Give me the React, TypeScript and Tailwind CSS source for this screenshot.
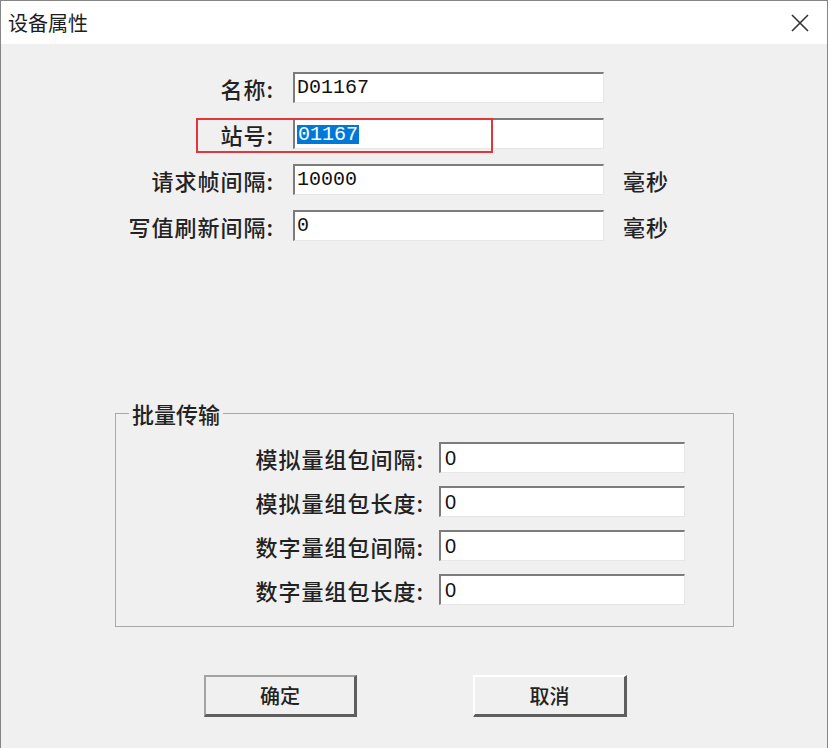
import React from "react";

const cjk = "font-['Noto_Sans_CJK_SC',sans-serif]";

function Field({ value, mono = true, selected = false }: { value: string; mono?: boolean; selected?: boolean }) {
  return (
    <div
      className={`h-[31px] bg-white border-t-2 border-l-2 border-t-[#7c7c7c] border-l-[#7c7c7c] border-b border-r border-b-[#e6e6e6] border-r-[#e6e6e6] flex items-center pl-[2px] text-[20px] text-[#111] ${
        mono ? "font-['Liberation_Mono',monospace]" : "font-['Liberation_Sans',sans-serif] pl-[4px]"
      }`}
    >
      {selected ? (
        <span className="bg-[#0078d7] text-white leading-[19px] px-[1px]">{value}</span>
      ) : (
        <span className="leading-[20px]">{value}</span>
      )}
    </div>
  );
}

export default function App() {
  const top = [
    { label: "名称:", value: "D01167", unit: "" },
    { label: "站号:", value: "01167", unit: "", selected: true },
    { label: "请求帧间隔:", value: "10000", unit: "毫秒" },
    { label: "写值刷新间隔:", value: "0", unit: "毫秒" },
  ];
  const batch = ["模拟量组包间隔:", "模拟量组包长度:", "数字量组包间隔:", "数字量组包长度:"];

  return (
    <div className={`w-[831px] h-[748px] bg-white overflow-hidden ${cjk}`}>
      <div className="w-[828px] h-[760px] border-l border-t border-r border-[#858585] flex flex-col">
        {/* title bar */}
        <div className="h-[43px] bg-white flex items-center justify-between pl-[7px] pr-[17px]">
          <span className="text-[20px] text-[#1e1e1e] leading-none">设备属性</span>
          <svg width="20" height="20" viewBox="0 0 20 20">
            <path d="M2 2 L18 18 M18 2 L2 18" stroke="#333" strokeWidth="1.6" fill="none" />
          </svg>
        </div>

        {/* body */}
        <div className="flex-1 bg-[#f0f0f0] pt-[28px] flex flex-col">
          <div className="flex flex-col gap-[15px]">
            {top.map((r) => (
              <div key={r.label} className="relative flex items-center h-[31px]">
                <div className="w-[273px] text-right text-[22px] tracking-[1px] font-medium text-[#222] leading-none">{r.label}</div>
                <div className="ml-[19px] w-[311px]">
                  <Field value={r.value} selected={r.selected} />
                </div>
                <div className="ml-[19px] text-[22px] tracking-[1px] font-medium text-[#222] leading-none">{r.unit}</div>
                {r.selected && (
                  <div className="absolute left-[195px] top-0 w-[297px] h-[35px] border-2 border-[#e2363b]" />
                )}
              </div>
            ))}
          </div>

          <fieldset className="mt-[158px] ml-[114px] w-[619px] border border-[#a9a9a9] pt-[15px] pb-[21px]">
            <legend className="ml-[13px] px-[3px] text-[22px] font-medium text-[#222] leading-[28px]">批量传输</legend>
            <div className="flex flex-col gap-[13px]">
              {batch.map((l) => (
                <div key={l} className="flex items-center h-[31px]">
                  <div className="w-[308px] text-right text-[22px] tracking-[1px] font-medium text-[#222] leading-none">{l}</div>
                  <div className="ml-[15px] w-[246px]">
                    <Field value="0" mono={false} />
                  </div>
                </div>
              ))}
            </div>
          </fieldset>

          <div className="mt-[48px] flex">
            <button className="ml-[203px] w-[153px] h-[42px] bg-[#f0f0f0] border-t-2 border-l-2 border-t-[#a3a3a3] border-l-[#a3a3a3] border-b-[3px] border-r-[3px] border-b-[#5e5e5e] border-r-[#5e5e5e] text-[20px] font-medium text-[#222]">
              确定
            </button>
            <button className="ml-[116px] w-[154px] h-[42px] bg-[#f0f0f0] border-t-2 border-l-2 border-t-white border-l-white border-b-[3px] border-r-[3px] border-b-[#5e5e5e] border-r-[#5e5e5e] text-[20px] font-medium text-[#222]">
              取消
            </button>
          </div>
        </div>
      </div>
    </div>
  );
}
